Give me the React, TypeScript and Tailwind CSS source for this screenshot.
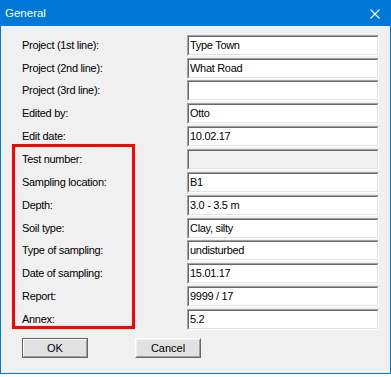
import React from 'react';

type Row = { label: string; value: string; disabled?: boolean; h: string };

const rows: Row[] = [
  { label: 'Project (1st line):', value: 'Type Town', h: 'h-[23px]' },
  { label: 'Project (2nd line):', value: 'What Road', h: 'h-[22px]' },
  { label: 'Project (3rd line):', value: '', h: 'h-[23px]' },
  { label: 'Edited by:', value: 'Otto', h: 'h-[23px]' },
  { label: 'Edit date:', value: '10.02.17', h: 'h-[23px]' },
  { label: 'Test number:', value: '', disabled: true, h: 'h-[23px]' },
  { label: 'Sampling location:', value: 'B1', h: 'h-[23px]' },
  { label: 'Depth:', value: '3.0 - 3.5 m', h: 'h-[23px]' },
  { label: 'Soil type:', value: 'Clay, silty', h: 'h-[22px]' },
  { label: 'Type of sampling:', value: 'undisturbed', h: 'h-[23px]' },
  { label: 'Date of sampling:', value: '15.01.17', h: 'h-[23px]' },
  { label: 'Report:', value: '9999 / 17', h: 'h-[23px]' },
  { label: 'Annex:', value: '5.2', h: 'h-[21px]' },
];

const font = "font-['Liberation_Sans',Arial,sans-serif]";

function Field({ value, disabled }: { value: string; disabled?: boolean }) {
  return (
    <div className="w-[192px] h-[21px] border border-t-[#a0a0a0] border-l-[#a0a0a0] border-b-white border-r-white">
      <div
        className={`h-full border border-t-[#696969] border-l-[#696969] border-b-[#e3e3e3] border-r-[#e3e3e3] pl-[1px] flex items-center text-[11px] tracking-[-0.3px] text-black ${
          disabled ? 'bg-[#f0f0f0]' : 'bg-white'
        }`}
      >
        {value}
      </div>
    </div>
  );
}

export default function App() {
  return (
    <div className={`relative w-[391px] h-[377px] bg-white ${font}`}>
      <div className="w-[391px] h-[374px] flex flex-col border-b border-[#0078d7]">
        {/* title bar */}
        <div className="h-[26px] bg-[#0078d7] flex items-center justify-between pl-[5px] pr-[11px] shrink-0">
          <span className="text-white text-[11.5px] pt-[1px]">General</span>
          <svg width="10" height="10" viewBox="0 0 10 10" className="mt-[1px]">
            <path d="M0.5 0.5 L9.5 9.5 M9.5 0.5 L0.5 9.5" stroke="white" strokeWidth="1.1" />
          </svg>
        </div>

        <div className="flex-1 bg-[#f0f0f0] border-x border-[#0078d7] pt-[9px] pl-[21px]">
          <div className="flex flex-col">
            {rows.map((r) => (
              <div key={r.label} className={`${r.h} flex items-start`}>
                <div className="w-[165px] h-[21px] flex items-center text-[11px] tracking-[-0.3px] text-black">
                  {r.label}
                </div>
                <Field value={r.value} disabled={r.disabled} />
              </div>
            ))}
          </div>

          <div className="flex gap-[47px] mt-[8px]">
            <button className="w-[66px] h-[20px] border border-[#646464] bg-[#e1e1e1] p-0">
              <div className="h-full border border-t-white border-l-white border-b-[#a0a0a0] border-r-[#a0a0a0] flex items-center justify-center text-[11px] text-black pt-[1px]">
                OK
              </div>
            </button>
            <button className="w-[66px] h-[20px] border border-t-white border-l-white border-b-[#696969] border-r-[#696969] bg-[#e1e1e1] p-0">
              <div className="h-full border border-t-[#f0f0f0] border-l-[#f0f0f0] border-b-[#a0a0a0] border-r-[#a0a0a0] flex items-center justify-center text-[11px] text-black pt-[1px]">
                Cancel
              </div>
            </button>
          </div>
        </div>
      </div>

      {/* highlight box */}
      <div className="absolute left-[12px] top-[144px] w-[123px] h-[185px] border-[3px] border-[#ff0000]" />
    </div>
  );
}
